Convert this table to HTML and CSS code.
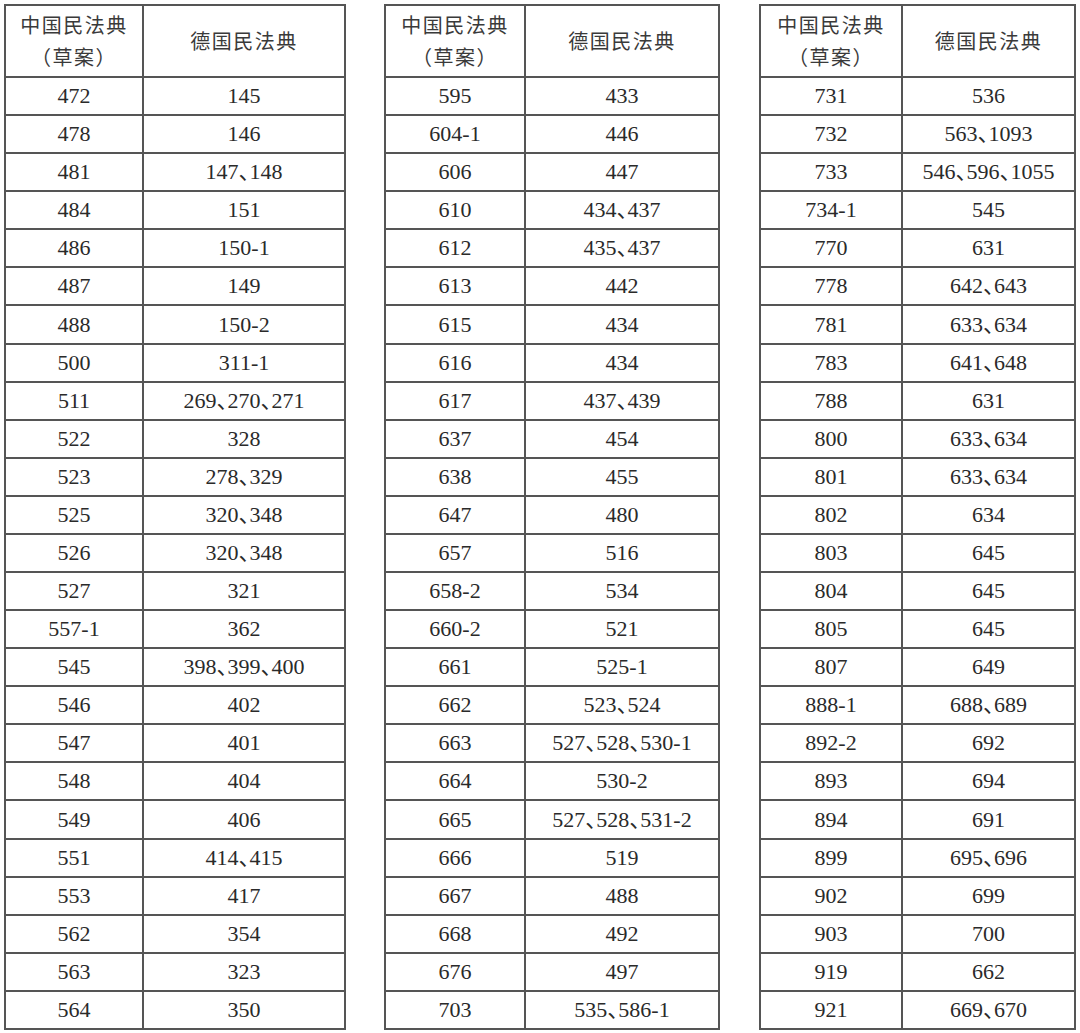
FILE: index.html
```html
<!DOCTYPE html>
<html lang="zh">
<head>
<meta charset="utf-8">
<link rel="stylesheet" href="styles.css">
</head>
<body>
<div class="page">
  <table class="tbl t1">
    <colgroup><col class="c1"><col class="c2"></colgroup>
    <thead><tr><th>中国民法典<br>（草案）</th><th>德国民法典</th></tr></thead>
    <tbody>
      <tr><td>472</td><td>145</td></tr>
      <tr><td>478</td><td>146</td></tr>
      <tr><td>481</td><td>147、148</td></tr>
      <tr><td>484</td><td>151</td></tr>
      <tr><td>486</td><td>150-1</td></tr>
      <tr><td>487</td><td>149</td></tr>
      <tr><td>488</td><td>150-2</td></tr>
      <tr><td>500</td><td>311-1</td></tr>
      <tr><td>511</td><td>269、270、271</td></tr>
      <tr><td>522</td><td>328</td></tr>
      <tr><td>523</td><td>278、329</td></tr>
      <tr><td>525</td><td>320、348</td></tr>
      <tr><td>526</td><td>320、348</td></tr>
      <tr><td>527</td><td>321</td></tr>
      <tr><td>557-1</td><td>362</td></tr>
      <tr><td>545</td><td>398、399、400</td></tr>
      <tr><td>546</td><td>402</td></tr>
      <tr><td>547</td><td>401</td></tr>
      <tr><td>548</td><td>404</td></tr>
      <tr><td>549</td><td>406</td></tr>
      <tr><td>551</td><td>414、415</td></tr>
      <tr><td>553</td><td>417</td></tr>
      <tr><td>562</td><td>354</td></tr>
      <tr><td>563</td><td>323</td></tr>
      <tr><td>564</td><td>350</td></tr>
    </tbody>
  </table>
  <table class="tbl t2">
    <colgroup><col class="c1"><col class="c2"></colgroup>
    <thead><tr><th>中国民法典<br>（草案）</th><th>德国民法典</th></tr></thead>
    <tbody>
      <tr><td>595</td><td>433</td></tr>
      <tr><td>604-1</td><td>446</td></tr>
      <tr><td>606</td><td>447</td></tr>
      <tr><td>610</td><td>434、437</td></tr>
      <tr><td>612</td><td>435、437</td></tr>
      <tr><td>613</td><td>442</td></tr>
      <tr><td>615</td><td>434</td></tr>
      <tr><td>616</td><td>434</td></tr>
      <tr><td>617</td><td>437、439</td></tr>
      <tr><td>637</td><td>454</td></tr>
      <tr><td>638</td><td>455</td></tr>
      <tr><td>647</td><td>480</td></tr>
      <tr><td>657</td><td>516</td></tr>
      <tr><td>658-2</td><td>534</td></tr>
      <tr><td>660-2</td><td>521</td></tr>
      <tr><td>661</td><td>525-1</td></tr>
      <tr><td>662</td><td>523、524</td></tr>
      <tr><td>663</td><td>527、528、530-1</td></tr>
      <tr><td>664</td><td>530-2</td></tr>
      <tr><td>665</td><td>527、528、531-2</td></tr>
      <tr><td>666</td><td>519</td></tr>
      <tr><td>667</td><td>488</td></tr>
      <tr><td>668</td><td>492</td></tr>
      <tr><td>676</td><td>497</td></tr>
      <tr><td>703</td><td>535、586-1</td></tr>
    </tbody>
  </table>
  <table class="tbl t3">
    <colgroup><col class="c1"><col class="c2"></colgroup>
    <thead><tr><th>中国民法典<br>（草案）</th><th>德国民法典</th></tr></thead>
    <tbody>
      <tr><td>731</td><td>536</td></tr>
      <tr><td>732</td><td>563、1093</td></tr>
      <tr><td>733</td><td>546、596、1055</td></tr>
      <tr><td>734-1</td><td>545</td></tr>
      <tr><td>770</td><td>631</td></tr>
      <tr><td>778</td><td>642、643</td></tr>
      <tr><td>781</td><td>633、634</td></tr>
      <tr><td>783</td><td>641、648</td></tr>
      <tr><td>788</td><td>631</td></tr>
      <tr><td>800</td><td>633、634</td></tr>
      <tr><td>801</td><td>633、634</td></tr>
      <tr><td>802</td><td>634</td></tr>
      <tr><td>803</td><td>645</td></tr>
      <tr><td>804</td><td>645</td></tr>
      <tr><td>805</td><td>645</td></tr>
      <tr><td>807</td><td>649</td></tr>
      <tr><td>888-1</td><td>688、689</td></tr>
      <tr><td>892-2</td><td>692</td></tr>
      <tr><td>893</td><td>694</td></tr>
      <tr><td>894</td><td>691</td></tr>
      <tr><td>899</td><td>695、696</td></tr>
      <tr><td>902</td><td>699</td></tr>
      <tr><td>903</td><td>700</td></tr>
      <tr><td>919</td><td>662</td></tr>
      <tr><td>921</td><td>669、670</td></tr>
    </tbody>
  </table>
</div>
</body>
</html>
```
FILE: styles.css
```css
html, body {
  margin: 0;
  padding: 0;
  background: #ffffff;
}

.page {
  display: flex;
  align-items: flex-start;
  padding: 4px 0 0 4px;
}

.tbl {
  border-collapse: collapse;
  table-layout: fixed;
  border: 2px solid #3a3a3a;
  color: #2a2a2a;
  font-family: "Liberation Serif", "Noto Sans CJK SC", serif;
  font-size: 22px;
  font-feature-settings: "halt";
}

.tbl th,
.tbl td {
  border: 2px solid #555555;
  padding: 0;
  text-align: center;
  vertical-align: middle;
  white-space: nowrap;
}

.tbl th {
  height: 70px;
  font-family: "Noto Sans CJK SC", sans-serif;
  font-weight: 400;
  font-size: 20px;
  letter-spacing: 1.5px;
  line-height: 32px;
  color: #3a3a3a;
  font-feature-settings: normal;
}

.tbl td {
  height: 36.08px;
  line-height: 24px;
}

.t1 { width: 340px; }
.t1 .c1 { width: 138px; }
.t1 .c2 { width: 202px; }

.t2 { width: 334px; margin-left: 38px; }
.t2 .c1 { width: 140px; }
.t2 .c2 { width: 194px; }

.t3 { width: 315px; margin-left: 39px; }
.t3 .c1 { width: 142px; }
.t3 .c2 { width: 173px; }
```
